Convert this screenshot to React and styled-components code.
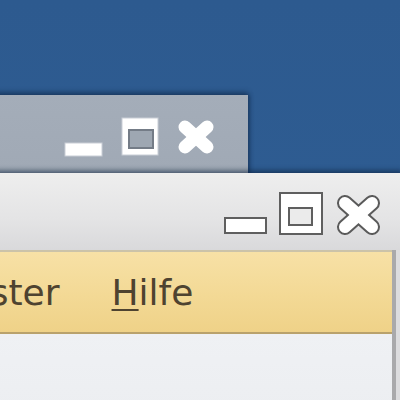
import React from 'react';
import styled, { createGlobalStyle } from 'styled-components';

const GlobalStyle = createGlobalStyle`
  html, body {
    margin: 0;
    padding: 0;
    background: #2e5c91;
  }
  body {
    font-family: "DejaVu Sans", "Liberation Sans", sans-serif;
  }
`;

const Desktop = styled.div`
  position: relative;
  width: 400px;
  height: 400px;
  overflow: hidden;
  background: linear-gradient(180deg, #2d5a8f 0%, #2f5e94 100%);
`;

// windows sit on a free canvas, so they get absolute coordinates
const Window = styled.div`
  position: absolute;
  left: ${p => p.$left}px;
  top: ${p => p.$top}px;
  width: ${p => p.$width}px;
  display: flex;
  flex-direction: column;
  box-shadow: 0 -3px 5px rgba(10, 30, 60, 0.45), 2px 0 4px rgba(10, 30, 60, 0.35);
`;

const TitleBar = styled.div`
  height: ${p => p.$height}px;
  display: flex;
  justify-content: flex-end;
  align-items: ${p => (p.$active ? 'flex-end' : 'flex-start')};
  gap: ${p => (p.$active ? 12 : 18)}px;
  box-sizing: border-box;
  padding: ${p => (p.$active ? '0 20px 15px 0' : '22px 33px 0 0')};
  background: ${p =>
    p.$active
      ? 'linear-gradient(180deg, #eeeeee 0%, #e4e4e5 60%, #d9d9db 100%)'
      : 'linear-gradient(180deg, #a4adb9 0%, #9ea7b3 100%)'};
`;

const ButtonSlot = styled.div`
  display: flex;
  align-items: flex-end;
  margin-bottom: ${p => p.$drop || 0}px;
  margin-top: ${p => p.$top || 0}px;
`;

const Frame = styled.div`
  display: flex;
  flex-direction: column;
  padding-right: 6px;
  background: #dcdcde;
`;

const Client = styled.div`
  display: flex;
  flex-direction: column;
  border-right: 4px solid #a9a9ab;
`;

const MenuBar = styled.div`
  height: 84px;
  box-sizing: border-box;
  display: flex;
  align-items: center;
  border-top: 2px solid #cbc3a9;
  border-bottom: 2px solid #b9a26c;
  background: linear-gradient(180deg, #f7e1a6 0%, #f3d995 55%, #efd288 100%);
`;

const MenuItem = styled.span`
  padding: 0 26px;
  font-size: 36px;
  color: #4e4330;
  white-space: nowrap;
`;

const Mnemonic = styled.span`
  text-decoration: underline;
  text-decoration-thickness: 2px;
  text-underline-offset: 4px;
`;

const Content = styled.div`
  height: 80px;
  background: linear-gradient(180deg, #eff1f4 0%, #eceef1 100%);
`;

const MinimizeIcon = ({ w, h, active }) => (
  <svg width={w} height={h} viewBox={`0 0 ${w} ${h}`}>
    <rect
      x="1"
      y="1"
      width={w - 2}
      height={h - 2}
      fill="#ffffff"
      stroke={active ? '#5f5f5f' : '#c9ced6'}
      strokeWidth={active ? 2 : 1}
    />
  </svg>
);

const MaximizeIcon = ({ w, h, inner, active }) => (
  <svg width={w} height={h} viewBox={`0 0 ${w} ${h}`}>
    <rect
      x="1"
      y="1"
      width={w - 2}
      height={h - 2}
      fill="#ffffff"
      stroke={active ? '#5f5f5f' : '#c9ced6'}
      strokeWidth={active ? 2 : 1}
    />
    <rect
      x={inner.x}
      y={inner.y}
      width={inner.w}
      height={inner.h}
      fill={active ? '#ebebeb' : '#9ea7b2'}
      stroke={active ? '#5f5f5f' : '#747c87'}
      strokeWidth="2"
    />
  </svg>
);

const CloseIcon = ({ w, h, pad, active }) => {
  const a = `M${pad} ${pad} L${w - pad} ${h - pad}`;
  const b = `M${w - pad} ${pad} L${pad} ${h - pad}`;
  return (
    <svg width={w} height={h} viewBox={`0 0 ${w} ${h}`}>
      {active && (
        <g stroke="#5a5a5a" strokeWidth="16" strokeLinecap="round">
          <path d={a} />
          <path d={b} />
        </g>
      )}
      <g stroke="#ffffff" strokeWidth={active ? 12 : 13} strokeLinecap="round">
        <path d={a} />
        <path d={b} />
      </g>
    </svg>
  );
};

export default function App() {
  return (
    <>
      <GlobalStyle />
      <Desktop>
        <Window $left={-300} $top={95} $width={548}>
          <TitleBar $height={120}>
            <ButtonSlot $top={25}>
              <MinimizeIcon w={39} h={15} />
            </ButtonSlot>
            <ButtonSlot>
              <MaximizeIcon w={38} h={39} inner={{ x: 8, y: 13, w: 24, h: 18 }} />
            </ButtonSlot>
            <ButtonSlot $top={2}>
              <CloseIcon w={38} h={36} pad={8} />
            </ButtonSlot>
          </TitleBar>
        </Window>

        <Window $left={-100} $top={173} $width={502}>
          <TitleBar $active $height={77}>
            <ButtonSlot $drop={1}>
              <MinimizeIcon w={43} h={17} active />
            </ButtonSlot>
            <ButtonSlot>
              <MaximizeIcon w={44} h={43} inner={{ x: 10, y: 16, w: 23, h: 17 }} active />
            </ButtonSlot>
            <ButtonSlot $drop={-2}>
              <CloseIcon w={47} h={44} pad={10} active />
            </ButtonSlot>
          </TitleBar>
          <Frame>
            <Client>
              <MenuBar>
                <MenuItem>Fenster</MenuItem>
                <MenuItem>
                  <Mnemonic>H</Mnemonic>ilfe
                </MenuItem>
              </MenuBar>
              <Content />
            </Client>
          </Frame>
        </Window>
      </Desktop>
    </>
  );
}
